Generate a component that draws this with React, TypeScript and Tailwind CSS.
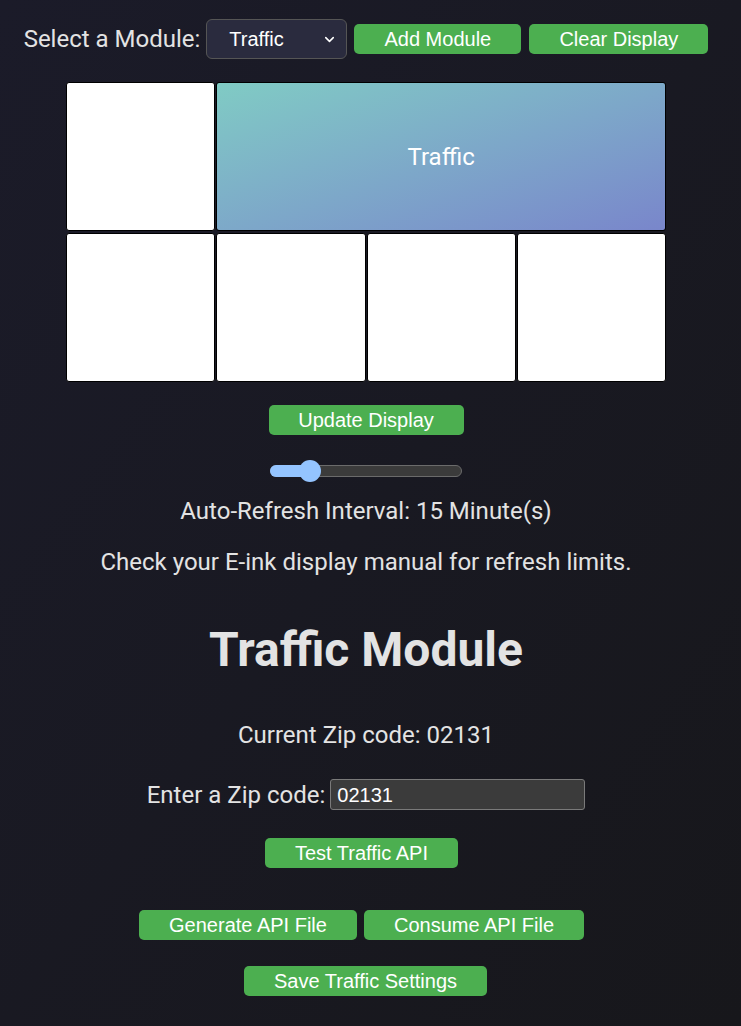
import { ChevronDown } from "lucide-react"

const btn =
  "h-[30px] rounded-[5px] bg-[#4caf50] text-[20px] leading-[30px] text-white font-['Liberation_Sans',Arial,sans-serif]"

export default function App() {
  const cells = [0, 1, 2, 3]
  return (
    <div className="min-h-[1026px] w-full bg-gradient-to-br from-[#1b1b29] to-[#17171b] font-['Roboto',sans-serif] text-[#e3e3e3]">
      <div className="flex w-[732px] flex-col items-center">
        {/* top controls */}
        <div className="mt-[19px] flex items-center">
          <span className="text-[24px] leading-[28px]">Select a Module:</span>
          <div className="ml-[6px] flex h-[40px] w-[141px] items-center justify-between rounded-[6px] border border-[#555] bg-[#2a2b3e] pl-[22px] pr-[9px] text-[20px] text-white font-['Liberation_Sans',Arial,sans-serif]">
            <span>Traffic</span>
            <ChevronDown className="size-[15px]" strokeWidth={2.5} />
          </div>
          <button className={`${btn} ml-[7px] w-[167px]`}>Add Module</button>
          <button className={`${btn} ml-[8px] w-[179px]`}>Clear Display</button>
        </div>

        {/* display grid */}
        <div className="mt-[23px] grid w-[600px] grid-cols-4 gap-x-[1px] gap-y-[2px]">
          <div className="h-[149px] rounded-[3px] border border-black bg-white" />
          <div className="col-span-3 flex h-[149px] items-center justify-center rounded-[3px] border border-black bg-gradient-to-br from-[#80cbc4] to-[#7986cb] text-[24px] text-white">
            Traffic
          </div>
          {cells.map((c) => (
            <div key={c} className="h-[149px] rounded-[3px] border border-black bg-white" />
          ))}
        </div>

        <button className={`${btn} mt-[23px] w-[195px]`}>Update Display</button>

        {/* refresh slider */}
        <div className="relative mt-[26px] h-[20px] w-[192px]">
          <div className="absolute left-0 top-[4px] h-[12px] w-full rounded-full border border-[#6b6b6b] bg-[#3b3b3b]" />
          <div className="absolute left-0 top-[4px] h-[12px] w-[42px] rounded-l-full bg-[#94c4ff]" />
          <div className="absolute left-[29px] top-[-1px] size-[22px] rounded-full bg-[#94c4ff]" />
        </div>

        <p className="mt-[16px] text-[24px] leading-[28px]">Auto-Refresh Interval: 15 Minute(s)</p>
        <p className="mt-[23px] text-[24px] leading-[28px]">Check your E-ink display manual for refresh limits.</p>

        {/* module settings */}
        <h1 className="mt-[46px] text-[48px] font-bold leading-[56px]">Traffic Module</h1>
        <p className="mt-[43px] text-[24px] leading-[28px]">Current Zip code: 02131</p>

        <div className="mt-[30px] flex items-center">
          <span className="text-[24px] leading-[28px]">Enter a Zip code:</span>
          <div className="ml-[5px] flex h-[31px] w-[255px] items-center rounded-[3px] border border-[#7a7a7a] bg-[#3b3b3b] px-[6px] text-[20px] text-white font-['Liberation_Sans',Arial,sans-serif]">
            02131
          </div>
        </div>

        <button className={`${btn} mr-[9px] mt-[28px] w-[193px]`}>Test Traffic API</button>

        <div className="mr-[9px] mt-[42px] flex">
          <button className={`${btn} w-[218px]`}>Generate API File</button>
          <button className={`${btn} ml-[7px] w-[220px]`}>Consume API File</button>
        </div>

        <button className={`${btn} mr-[1px] mt-[26px] w-[243px]`}>Save Traffic Settings</button>
      </div>
    </div>
  )
}
